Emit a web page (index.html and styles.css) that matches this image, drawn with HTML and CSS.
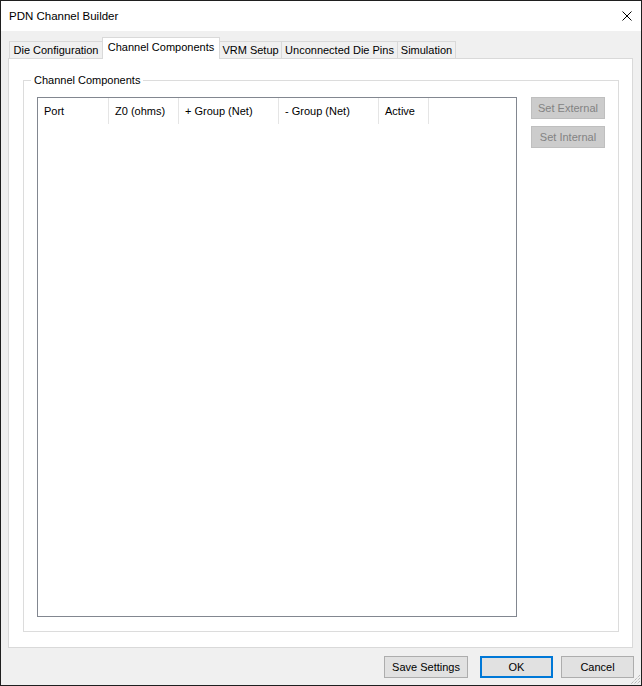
FILE: index.html
```html
<!DOCTYPE html>
<html lang="en">
<head>
    <meta charset="UTF-8">
    <meta name="viewport" content="width=device-width, initial-scale=1.0">
    <title>PDN Channel Builder</title>
    <link rel="stylesheet" href="styles.css">
</head>
<body>
    <div class="window">
        <!-- Title Bar -->
        <div class="titlebar">
            <span class="title">PDN Channel Builder</span>
            <svg class="close" width="10" height="10" viewBox="0 0 10 10">
                <path d="M0.5 0.5 L9.5 9.5 M9.5 0.5 L0.5 9.5" stroke="#000" stroke-width="1" fill="none"/>
            </svg>
        </div>

        <div class="client">
            <!-- Tabs -->
            <div class="tabs">
                <div class="tab tab-die">Die Configuration</div>
                <div class="tab tab-channel active">Channel Components</div>
                <div class="tab tab-vrm">VRM Setup</div>
                <div class="tab tab-pins">Unconnected Die Pins</div>
                <div class="tab tab-sim">Simulation</div>
            </div>

            <div class="tabpage">
                <fieldset class="group">
                    <legend>Channel Components</legend>
                    <div class="listview">
                        <div class="lv-header">
                            <div class="col col-port">Port</div>
                            <div class="col col-z0">Z0 (ohms)</div>
                            <div class="col col-group">+ Group (Net)</div>
                            <div class="col col-group">- Group (Net)</div>
                            <div class="col col-active">Active</div>
                        </div>
                    </div>
                    <div class="side-buttons">
                        <button class="btn" disabled>Set External</button>
                        <button class="btn" disabled>Set Internal</button>
                    </div>
                </fieldset>
            </div>

            <!-- Dialog buttons -->
            <div class="footer">
                <button class="btn btn-save">Save Settings</button>
                <button class="btn btn-ok">OK</button>
                <button class="btn btn-cancel">Cancel</button>
            </div>
        </div>

        <svg class="grip" width="11" height="11" viewBox="0 0 11 11">
            <path d="M10 1 L1 10 M10 4 L4 10 M10 7 L7 10" stroke="#a0a0a0" stroke-width="1" stroke-dasharray="1 1" fill="none"/>
        </svg>
    </div>
</body>
</html>
```

FILE: styles.css
```css
body, html {
    margin: 0;
    padding: 0;
    font-family: 'Liberation Sans', Arial, sans-serif;
    font-size: 11px;
    color: #000;
    background-color: #f0f0f0;
}

.window {
    position: relative;
    width: 642px;
    height: 686px;
    box-sizing: border-box;
    border: 1px solid #1f1f1f;
    background-color: #f0f0f0;
    display: flex;
    flex-direction: column;
}

.titlebar {
    height: 30px;
    background-color: #fff;
    display: flex;
    align-items: center;
    justify-content: space-between;
    padding: 0 9px 0 8px;
    flex-shrink: 0;
}

.title {
    font-size: 11.5px;
}

.client {
    flex: 1;
    display: flex;
    flex-direction: column;
    padding: 7px 7px 7px 7px;
}

.tabs {
    display: flex;
    align-items: flex-end;
    height: 20px;
    padding-left: 1px;
    position: relative;
    z-index: 1;
}

.tab {
    box-sizing: border-box;
    height: 17px;
    line-height: 16px;
    border: 1px solid #d9d9d9;
    border-bottom: none;
    background-color: #f0f0f0;
    text-align: center;
    margin-left: -1px;
    white-space: nowrap;
}

.tab:first-child {
    margin-left: 0;
}

.tab.active {
    height: 22px;
    line-height: 18px;
    background-color: #fff;
    margin-bottom: -1px;
    position: relative;
    z-index: 2;
}

.tab-die { width: 94px; }
.tab-channel { width: 118px; }
.tab-vrm { width: 63px; }
.tab-pins { width: 117px; }
.tab-sim { width: 59px; }

.tabpage {
    flex: 1;
    background-color: #fff;
    border: 1px solid #d9d9d9;
    margin-right: 1px;
    display: flex;
    flex-direction: column;
    padding: 13px 13px 15px 14px;
}

.group {
    flex: 1;
    margin: 0;
    border: 1px solid #dcdcdc;
    padding: 9px 13px 14px 13px;
    display: flex;
    min-width: 0;
}

.group legend {
    padding: 0 3px;
    margin-left: -6px;
    line-height: 16px;
}

.listview {
    flex: 1;
    border: 1px solid #828790;
    background-color: #fff;
}

.lv-header {
    display: flex;
    height: 26px;
}

.col {
    box-sizing: border-box;
    border-right: 1px solid #e5e5e5;
    padding-left: 6px;
    line-height: 26px;
    white-space: nowrap;
}

.col-port { width: 71px; }
.col-z0 { width: 70px; }
.col-group { width: 100px; }
.col-active { width: 50px; }

.side-buttons {
    display: flex;
    flex-direction: column;
    gap: 7px;
    margin-left: 14px;
    width: 74px;
}

.btn {
    box-sizing: border-box;
    height: 22px;
    font-family: inherit;
    font-size: 11px;
    color: #000;
    background-color: #e1e1e1;
    border: 1px solid #adadad;
    padding: 0;
    margin: 0;
}

.btn:disabled {
    background-color: #cccccc;
    border-color: #bfbfbf;
    color: #838383;
}

.footer {
    display: flex;
    justify-content: flex-end;
    align-items: center;
    padding-top: 8px;
}

.btn-save { width: 84px; margin-right: 12px; }
.btn-ok {
    width: 73px;
    margin-right: 8px;
    border: 2px solid #0078d7;
}
.btn-cancel { width: 73px; }

.grip {
    position: absolute;
    right: 0;
    bottom: 0;
}
```
